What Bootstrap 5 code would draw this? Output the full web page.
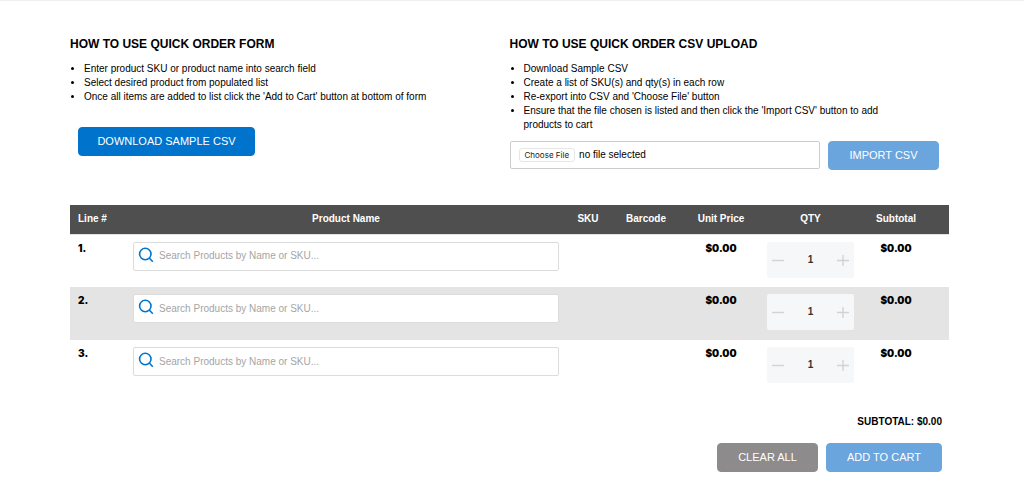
<!DOCTYPE html>
<html lang="en">
<head>
<meta charset="utf-8">
<meta name="viewport" content="width=device-width, initial-scale=1">
<title>Quick Order</title>
<link href="https://cdn.jsdelivr.net/npm/bootstrap@5.3.0/dist/css/bootstrap.min.css" rel="stylesheet">
<style>
  body { font-family: "Liberation Sans", Arial, sans-serif; font-size: 10px; line-height: 14px; color: #000; border-top: 1px solid #f0f0f0; }
  main { padding: 35px 75px 14px 70px; }
  h2 { font-size: 12px; line-height: 16px; font-weight: 700; margin-bottom: 10px; }
  .steps { padding-left: 14px; margin-bottom: 0; }
  .howto { min-height: 169px; }
  .btn-order { --bs-btn-font-size: 11px; --bs-btn-line-height: 15px; --bs-btn-padding-y: 6px; --bs-btn-padding-x: 18px; --bs-btn-border-radius: 4px; --bs-btn-color: #fff; --bs-btn-hover-color: #fff; --bs-btn-border-width: 1px; text-transform: uppercase; white-space: nowrap; }
  .btn-strong { --bs-btn-bg: #0074cc; --bs-btn-border-color: #0074cc; --bs-btn-hover-bg: #0063ad; width: 177px; margin: 23px 0 0 8px; }
  .btn-soft { --bs-btn-bg: #6aa5de; --bs-btn-border-color: #6aa5de; --bs-btn-hover-bg: #4c92d5; }
  .btn-grey { --bs-btn-bg: #8d8b8b; --bs-btn-border-color: #8d8b8b; --bs-btn-hover-bg: #777; width: 101px; }
  .btn-import { width: 111px; }
  .btn-cart { width: 116px; }
  .upload { padding-right: 10px; margin-top: 9px; }
  .filebox { height: 28px; border: 1px solid #ccc; border-radius: 2px; padding-left: 8px; }
  .choose { font-size: 8px; line-height: 10px; font-family: Inter, sans-serif; font-weight: 400; background: #fff; color: #222; border: 1px solid #e6e6e6; border-radius: 3px; padding: 1px 5px; }
  .lines { table-layout: fixed; width: 100%; }
  .lines thead { background: #4f4f4f; color: #fff; border-bottom: 1px solid #e3e3e3; }
  .lines th { height: 29px; text-align: center; vertical-align: middle; }
  .lines th:first-child { text-align: left; padding-left: 8px; }
  .lines td { height: 53px; vertical-align: top; padding: 7px 7px 0; }
  .lines tbody tr:nth-child(even) { background: #e4e4e4; }
  .c-line { width: 56px; } .c-sku { width: 44px; } .c-code { width: 72px; } .c-price { width: 78px; }
  .c-qty { width: 101px; } .c-sub { width: 70px; } .c-end { width: 18px; }
  .lines .figure-strong { font-family: Inter, "Liberation Sans", sans-serif; font-weight: 900; text-align: center; padding-top: 6px; }
  .lines .figure-strong.start { text-align: left; padding-left: 8px; }
  .finder { height: 29px; background: #fff; border: 1px solid #dcdcdc; border-radius: 2px; padding-left: 4px; }
  .finder input { font-size: 10px; line-height: 14px; border: 0; outline: 0; padding: 0; background: none; min-width: 0; }
  .finder input::placeholder { color: #a5a5a5; opacity: 1; }
  .stepper { height: 36px; background: #f6f7f9; border-radius: 2px; }
  .stepper button { width: 22px; padding: 0; border: 0; background: none; line-height: 0; }
  .stepper input { min-width: 0; border: 0; background: none; text-align: center; font-weight: 700; color: #333; padding: 0; }
  .totals { margin-top: 22px; padding-right: 7px; }
  .actions { margin-top: 14px; }
</style>
</head>
<body>
<main>
  <div class="row gx-0">
    <section class="col-6 howto">
      <h2>HOW TO USE QUICK ORDER FORM</h2>
      <ul class="steps">
        <li>Enter product SKU or product name into search field</li>
        <li>Select desired product from populated list</li>
        <li>Once all items are added to list click the 'Add to Cart' button at bottom of form</li>
      </ul>
      <button type="button" class="btn btn-order btn-strong">Download Sample CSV</button>
    </section>
    <section class="col-6 howto">
      <h2>HOW TO USE QUICK ORDER CSV UPLOAD</h2>
      <ul class="steps pe-5">
        <li>Download Sample CSV</li>
        <li>Create a list of SKU(s) and qty(s) in each row</li>
        <li>Re-export into CSV and 'Choose File' button</li>
        <li>Ensure that the file chosen is listed and then click the 'Import CSV' button to add products to cart</li>
      </ul>
      <div class="upload d-flex gap-2">
        <div class="filebox flex-grow-1 d-flex align-items-center gap-1">
          <button type="button" class="choose" onclick="document.getElementById('csv').click()">Choose File</button>
          <label for="csv">no file selected</label>
          <input type="file" id="csv" accept=".csv" hidden>
        </div>
        <button type="button" class="btn btn-order btn-soft btn-import">Import CSV</button>
      </div>
    </section>
  </div>

  <table class="lines">
    <colgroup><col class="c-line"><col><col class="c-sku"><col class="c-code"><col class="c-price"><col class="c-qty"><col class="c-sub"><col class="c-end"></colgroup>
    <thead>
      <tr><th>Line #</th><th>Product Name</th><th>SKU</th><th>Barcode</th><th>Unit Price</th><th>QTY</th><th>Subtotal</th><th></th></tr>
    </thead>
    <tbody>
      <tr>
        <td class="figure-strong start">1.</td>
        <td><div class="finder d-flex gap-1"><svg width="17" height="25" viewBox="0 0 17 25" fill="none" stroke="#0074cc" stroke-width="1.6" aria-hidden="true"><circle cx="7.300" cy="11" r="5.700"/><path d="M11.300 15l3.500 3.700"/></svg><input class="flex-grow-1" type="text" aria-label="Product on line 1" placeholder="Search Products by Name or SKU..."></div></td>
        <td></td><td></td><td class="figure-strong">$0.00</td>
        <td><div class="stepper d-flex"><button type="button" aria-label="Decrease"><svg width="12" height="12" stroke="#d3d3d3" stroke-width="1.4"><path d="M0 6.500h12"/></svg></button><input class="flex-grow-1 w-25" type="text" value="1" aria-label="Quantity on line 1"><button type="button" aria-label="Increase"><svg width="12" height="12" stroke="#d3d3d3" stroke-width="1.4"><path d="M0 6.500h12M6 1v11"/></svg></button></div></td>
        <td class="figure-strong">$0.00</td><td></td>
      </tr>
      <tr>
        <td class="figure-strong start">2.</td>
        <td><div class="finder d-flex gap-1"><svg width="17" height="25" viewBox="0 0 17 25" fill="none" stroke="#0074cc" stroke-width="1.6" aria-hidden="true"><circle cx="7.300" cy="11" r="5.700"/><path d="M11.300 15l3.500 3.700"/></svg><input class="flex-grow-1" type="text" aria-label="Product on line 2" placeholder="Search Products by Name or SKU..."></div></td>
        <td></td><td></td><td class="figure-strong">$0.00</td>
        <td><div class="stepper d-flex"><button type="button" aria-label="Decrease"><svg width="12" height="12" stroke="#d3d3d3" stroke-width="1.4"><path d="M0 6.500h12"/></svg></button><input class="flex-grow-1 w-25" type="text" value="1" aria-label="Quantity on line 2"><button type="button" aria-label="Increase"><svg width="12" height="12" stroke="#d3d3d3" stroke-width="1.4"><path d="M0 6.500h12M6 1v11"/></svg></button></div></td>
        <td class="figure-strong">$0.00</td><td></td>
      </tr>
      <tr>
        <td class="figure-strong start">3.</td>
        <td><div class="finder d-flex gap-1"><svg width="17" height="25" viewBox="0 0 17 25" fill="none" stroke="#0074cc" stroke-width="1.6" aria-hidden="true"><circle cx="7.300" cy="11" r="5.700"/><path d="M11.300 15l3.500 3.700"/></svg><input class="flex-grow-1" type="text" aria-label="Product on line 3" placeholder="Search Products by Name or SKU..."></div></td>
        <td></td><td></td><td class="figure-strong">$0.00</td>
        <td><div class="stepper d-flex"><button type="button" aria-label="Decrease"><svg width="12" height="12" stroke="#d3d3d3" stroke-width="1.4"><path d="M0 6.500h12"/></svg></button><input class="flex-grow-1 w-25" type="text" value="1" aria-label="Quantity on line 3"><button type="button" aria-label="Increase"><svg width="12" height="12" stroke="#d3d3d3" stroke-width="1.4"><path d="M0 6.500h12M6 1v11"/></svg></button></div></td>
        <td class="figure-strong">$0.00</td><td></td>
      </tr>
    </tbody>
  </table>

  <div class="totals d-flex flex-column align-items-end">
    <strong>SUBTOTAL: $0.00</strong>
    <div class="actions d-flex gap-2">
      <button type="button" class="btn btn-order btn-grey">Clear All</button>
      <button type="button" class="btn btn-order btn-soft btn-cart">Add to Cart</button>
    </div>
  </div>
</main>
<script src="https://cdn.jsdelivr.net/npm/bootstrap@5.3.0/dist/js/bootstrap.bundle.min.js"></script>
</body>
</html>
